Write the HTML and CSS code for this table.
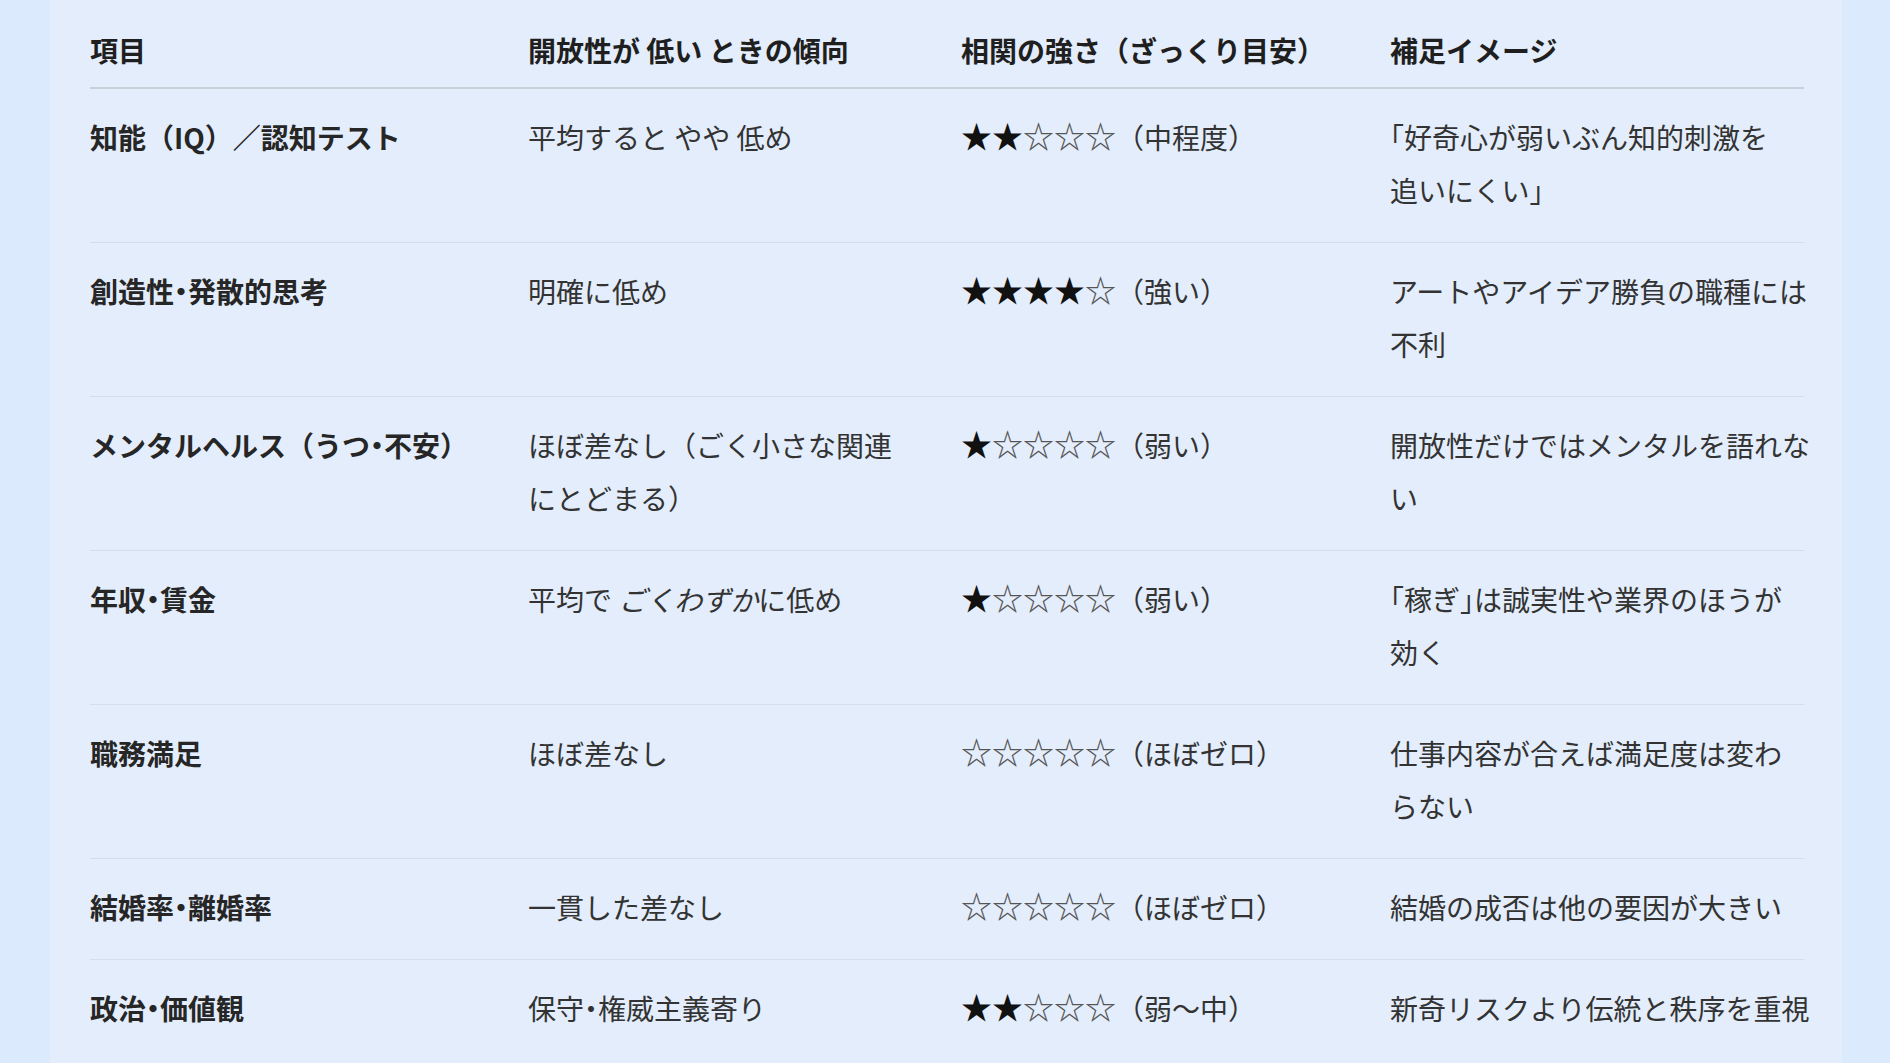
FILE: index.html
```html
<!DOCTYPE html>
<html lang="ja">
<head>
<meta charset="utf-8">
<title>開放性が低いときの傾向</title>
<link rel="stylesheet" href="styles.css">
</head>
<body>
<main class="panel">
  <div class="table">
    <div class="row head">
      <div class="cell">項目</div>
      <div class="cell">開放性が 低い ときの傾向</div>
      <div class="cell">相関の強さ（ざっくり目安）</div>
      <div class="cell">補足イメージ</div>
    </div>
    <div class="row">
      <div class="cell key">知能（IQ）／認知テスト</div>
      <div class="cell">平均すると やや 低め</div>
      <div class="cell"><span class="stars"><span class="on">★★</span><span class="off">☆☆☆</span></span>（中程度）</div>
      <div class="cell"><span class="p">「</span>好奇心が弱いぶん知的刺激を<br>追いにくい<span class="p">」</span></div>
    </div>
    <div class="row">
      <div class="cell key">創造性<span class="p">・</span>発散的思考</div>
      <div class="cell">明確に低め</div>
      <div class="cell"><span class="stars"><span class="on">★★★★</span><span class="off">☆</span></span>（強い）</div>
      <div class="cell">アートやアイデア勝負の職種には<br>不利</div>
    </div>
    <div class="row">
      <div class="cell key">メンタルヘルス（うつ<span class="p">・</span>不安）</div>
      <div class="cell">ほぼ差なし（ごく小さな関連<br>にとどまる）</div>
      <div class="cell"><span class="stars"><span class="on">★</span><span class="off">☆☆☆☆</span></span>（弱い）</div>
      <div class="cell">開放性だけではメンタルを語れな<br>い</div>
    </div>
    <div class="row">
      <div class="cell key">年収<span class="p">・</span>賃金</div>
      <div class="cell">平均で <em>ごくわずか</em>に低め</div>
      <div class="cell"><span class="stars"><span class="on">★</span><span class="off">☆☆☆☆</span></span>（弱い）</div>
      <div class="cell"><span class="p">「</span>稼ぎ<span class="p">」</span>は誠実性や業界のほうが<br>効く</div>
    </div>
    <div class="row">
      <div class="cell key">職務満足</div>
      <div class="cell">ほぼ差なし</div>
      <div class="cell"><span class="stars"><span class="off">☆☆☆☆☆</span></span>（ほぼゼロ）</div>
      <div class="cell">仕事内容が合えば満足度は変わ<br>らない</div>
    </div>
    <div class="row">
      <div class="cell key">結婚率<span class="p">・</span>離婚率</div>
      <div class="cell">一貫した差なし</div>
      <div class="cell"><span class="stars"><span class="off">☆☆☆☆☆</span></span>（ほぼゼロ）</div>
      <div class="cell">結婚の成否は他の要因が大きい</div>
    </div>
    <div class="row">
      <div class="cell key">政治<span class="p">・</span>価値観</div>
      <div class="cell">保守<span class="p">・</span>権威主義寄り</div>
      <div class="cell"><span class="stars"><span class="on">★★</span><span class="off">☆☆☆</span></span>（弱〜中）</div>
      <div class="cell">新奇リスクより伝統と秩序を重視</div>
    </div>
  </div>
</main>
</body>
</html>
```

FILE: styles.css
```css
html, body {
  margin: 0;
  padding: 0;
  background: #dceafd;
  height: 100%;
  overflow: hidden;
}

body {
  font-family: "Noto Sans CJK JP", "Noto Sans", sans-serif;
  color: #333333;
}

.panel {
  margin: 0 48px 0 50px;
  padding: 24px 38px 0 40px;
  background: #e3edfb;
  min-height: 100%;
  box-sizing: border-box;
}

.table {
  display: flex;
  flex-direction: column;
}

.row {
  display: grid;
  grid-template-columns: 438px 433px 429px 414px;
  border-bottom: 1px solid #d4deea;
  font-size: 28px;
  line-height: 53px;
}

.row:last-child {
  border-bottom: none;
}

.row .cell {
  padding: 22px 0 25px;
  white-space: nowrap;
}

.row.head {
  border-bottom: 2px solid #c9d0da;
  font-weight: 700;
  color: #1f1f1f;
}

.row.head .cell {
  padding: 0 0 10px;
}

.cell.key {
  font-weight: 700;
  color: #262626;
}

.p {
  font-feature-settings: "halt";
}

.stars {
  font-size: 31px;
  line-height: 1;
  vertical-align: 1px;
}

.on {
  color: #111111;
}

.off {
  color: #555555;
}

em {
  font-style: italic;
}
```
